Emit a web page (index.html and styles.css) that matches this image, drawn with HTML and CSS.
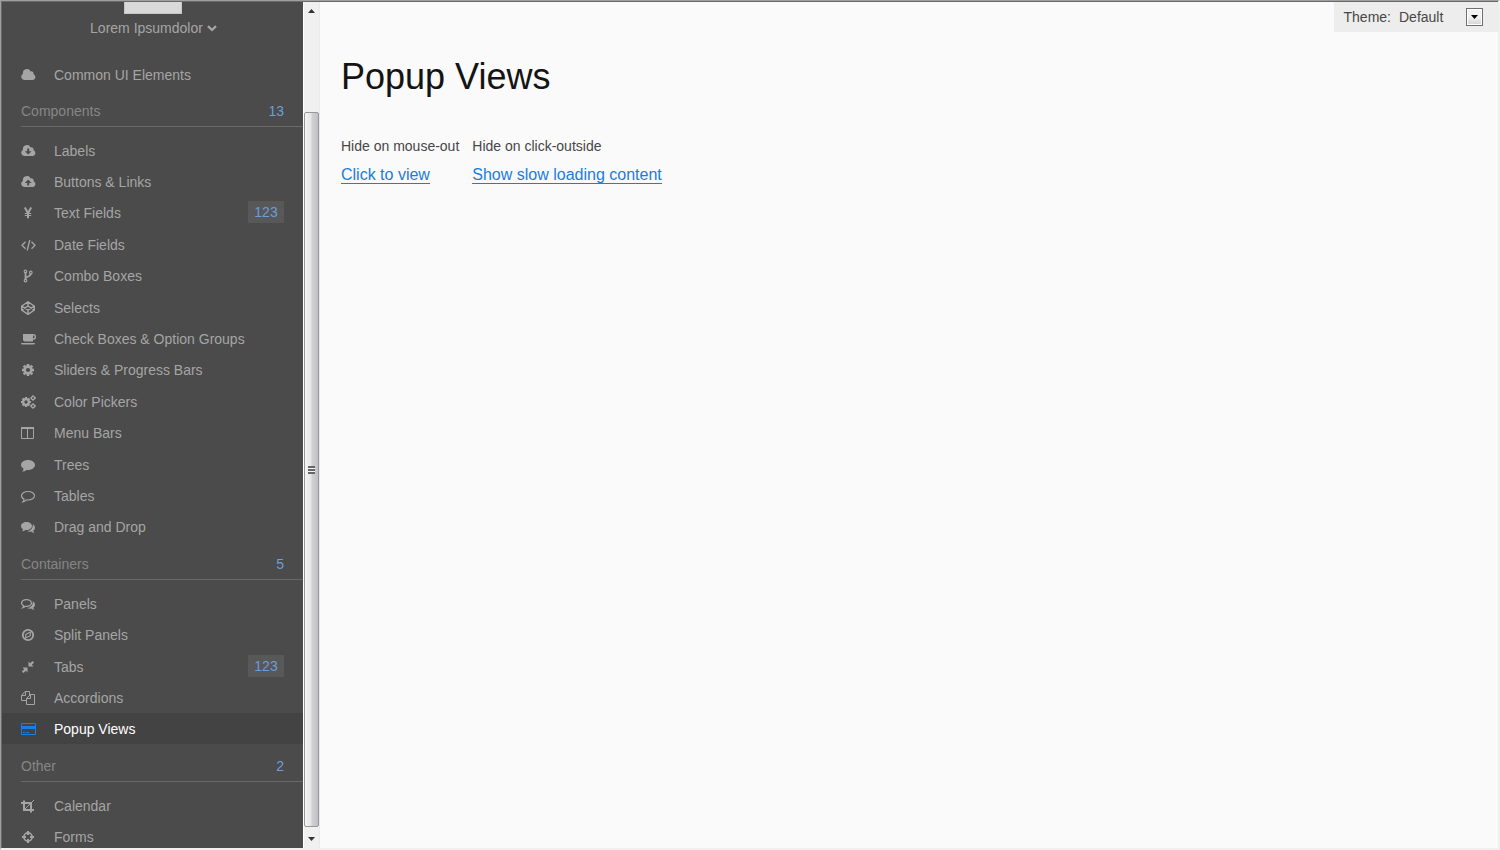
FILE: index.html
```html
<!DOCTYPE html>
<html lang="en">
<head>
<meta charset="utf-8">
<title>Popup Views</title>
<link rel="stylesheet" href="styles.css">
</head>
<body>
<div class="app">
  <aside class="sidebar">
    <div class="avatar"></div>
    <button class="user" type="button">Lorem Ipsumdolor
      <svg class="user-caret" viewBox="0 0 10 7"><path d="M1 1.2 5 5 9 1.2" fill="none" stroke="currentColor" stroke-width="2.3"/></svg>
    </button>
    <nav class="menu">
      <ul class="list">
        <li><a class="item" href="#"><svg class="icon" viewBox="0 0 15 14"><path d="M3.300 12A3.300 3.300 0 0 1 2 5.800 4 4 0 0 1 9.600 3.500 2.200 2.200 0 0 1 12.500 6.300 3 3 0 0 1 12.200 12z"/></svg>Common UI Elements</a></li>
      </ul>

      <h2 class="heading">Components <span class="count">13</span></h2>
      <ul class="list list-long">
        <li><a class="item" href="#"><svg class="icon" viewBox="0 0 15 14"><path fill-rule="evenodd" d="M3.300 12A3.300 3.300 0 0 1 2 5.800 4 4 0 0 1 9.600 3.500 2.200 2.200 0 0 1 12.500 6.300 3 3 0 0 1 12.200 12zM6.200 4.500v2.800H3.900L7.200 10.600 10.500 7.300H8.200V4.500z"/></svg>Labels</a></li>
        <li><a class="item" href="#"><svg class="icon" viewBox="0 0 15 14"><path fill-rule="evenodd" d="M3.300 12A3.300 3.300 0 0 1 2 5.800 4 4 0 0 1 9.600 3.500 2.200 2.200 0 0 1 12.500 6.300 3 3 0 0 1 12.200 12zM6.200 10.600V7.900H3.900L7.200 4.600 10.500 7.900H8.200v2.700z"/></svg>Buttons &amp; Links</a></li>
        <li><a class="item" href="#"><svg class="icon" viewBox="0 0 15 14"><path class="line" stroke-width="2" d="M3.800 1.500 7 7 10.200 1.500M7 6.500v5.800"/><path class="line" stroke-width="1.200" d="M3.800 7.500h6.400M3.800 9.500h6.400"/></svg>Text Fields</a><span class="badge">123</span></li>
        <li><a class="item" href="#"><svg class="icon" viewBox="0 0 15 14"><path class="line" stroke-width="1.300" d="M4.500 3.800 1 7.300l3.500 3.500M10.500 3.800 14 7.300l-3.500 3.500M8.800 2 6.200 12.500"/></svg>Date Fields</a></li>
        <li><a class="item" href="#"><svg class="icon" viewBox="0 0 15 14"><g class="line" stroke-width="1.200"><circle cx="4.500" cy="2.400" r="1.300"/><circle cx="4.500" cy="11.600" r="1.300"/><circle cx="9.800" cy="3.500" r="1.300"/></g><path class="line" stroke-width="1.800" d="M4.500 3.700v6.600M9.800 4.800c0 3.200-5 2.200-5 4.800"/></svg>Combo Boxes</a></li>
        <li><a class="item" href="#"><svg class="icon" viewBox="0 0 15 14"><path class="line" stroke-width="1.400" d="M7 .8 13.300 5v4.200L7 13.400.7 9.200V5zM7 .8V5M7 9.200v4.200M.7 5 7 9.200 13.300 5M.7 9.200 7 5l6.300 4.200"/></svg>Selects</a></li>
        <li><a class="item" href="#"><svg class="icon" viewBox="0 0 15 14"><path d="M2 2h10v7.500H4a2 2 0 0 1-2-2zM0 11h14q0 1.500-1.500 1.500h-11Q0 12.500 0 11z"/><path class="line" stroke-width="1.500" d="M11.500 2.800h1a1.500 1.700 0 0 1 0 4.200h-1"/></svg>Check Boxes &amp; Option Groups</a></li>
        <li><a class="item" href="#"><svg class="icon" viewBox="0 0 15 14"><circle class="line" stroke-width="2.600" cx="7" cy="7" r="3.400"/><path class="line" stroke-width="2.600" d="M7 1v2M7 11v2M1 7h2M11 7h2M2.700 2.700l1.300 1.300M10 10l1.300 1.300M11.300 2.700 10 4M4 10l-1.300 1.300"/></svg>Sliders &amp; Progress Bars</a></li>
        <li><a class="item" href="#"><svg class="icon" viewBox="0 0 15 14"><circle class="line" stroke-width="2.200" cx="5" cy="7" r="2.800"/><path class="line" stroke-width="2.200" d="M5 2v2M5 10v2M0 7h2M8 7h2M1.500 3.500l1.300 1.300M7.200 9.200l1.300 1.300M8.500 3.500 7.200 4.800M2.800 9.200l-1.300 1.300"/><g class="line" stroke-width="1.300"><circle cx="12" cy="3" r="1.600"/><circle cx="12" cy="11" r="1.600"/><path d="M12 .2v1M12 4.800v1M9.300 3h1M13.700 3h1.200M12 8.200v1M12 12.800v1M9.300 11h1M13.700 11h1.200"/></g></svg>Color Pickers</a></li>
        <li><a class="item" href="#"><svg class="icon" viewBox="0 0 15 14"><path class="line" d="M.5 1.500h12v11H.5zM6.500 2v10.500"/><path d="M0 1h13v2H0z"/></svg>Menu Bars</a></li>
        <li><a class="item" href="#"><svg class="icon" viewBox="0 0 15 14"><path d="M7 2c3.900 0 7 2.200 7 5s-3.100 5-7 5q-.7 0-1.400-.1Q3.700 13.500 1 13.600q1.500-1.300 1.600-2.800Q0 9.400 0 7c0-2.800 3.100-5 7-5z"/></svg>Trees</a></li>
        <li><a class="item" href="#"><svg class="icon" viewBox="0 0 15 14"><path class="line" stroke-width="1.200" d="M7 2.500c3.600 0 6.500 1.900 6.500 4.300S10.600 11 7 11q-.8 0-1.500-.1Q3.800 12.500 1.900 12.800q1.200-1.300 1.200-2.700Q.5 8.900.5 6.800C.5 4.400 3.400 2.500 7 2.500z"/></svg>Tables</a></li>
        <li><a class="item" href="#"><svg class="icon" viewBox="0 0 15 14"><path d="M5.500 2C8.500 2 11 3.700 11 6s-2.500 4-5.500 4l-1-.1Q3 11.200 1 11.300q1-1 1.100-2Q0 8.200 0 6c0-2.300 2.500-4 5.500-4zM11.900 4.200Q14 5.300 14 7.800q0 1.900-1.800 3 .2 1.200 1.300 2.200-2-.1-3.300-1.400-2.300.4-4.200-.6 6-.5 5.900-6.800z"/></svg>Drag and Drop</a></li>
      </ul>

      <h2 class="heading">Containers <span class="count">5</span></h2>
      <ul class="list list-medium">
        <li><a class="item" href="#"><svg class="icon" viewBox="0 0 15 14"><path class="line" stroke-width="1.300" d="M5.500 2.600c2.700 0 4.900 1.500 4.900 3.400S8.200 9.400 5.500 9.400l-1.200-.1Q3 10.300 1.900 10.600q.7-.8.7-1.800Q.6 7.800.6 6c0-1.900 2.200-3.400 4.900-3.400z"/><path d="M11.900 4.200Q14 5.300 14 7.800q0 1.900-1.800 3 .2 1.200 1.300 2.200-2-.1-3.300-1.400-2.300.4-4.200-.6 6-.5 5.900-6.800z"/></svg>Panels</a></li>
        <li><a class="item" href="#"><svg class="icon" viewBox="0 0 15 14"><circle class="line" stroke-width="1.800" cx="7" cy="7" r="5.200"/><path fill-rule="evenodd" d="M9.800 3.200v4.900L4.200 10.800V6zM8.700 5.100 5.300 6.700v2.400L8.700 7.400z"/></svg>Split Panels</a></li>
        <li><a class="item" href="#"><svg class="icon" viewBox="0 0 15 14"><path d="M7.500 6.500v-5l1.700 1.700L11.500.9 13.100 2.500 10.800 4.800 12.500 6.500zM6.500 7.500v5L4.800 10.800 2.500 13.100.9 11.500 3.200 9.200 1.500 7.500z"/></svg>Tabs</a><span class="badge">123</span></li>
        <li><a class="item" href="#"><svg class="icon" viewBox="0 0 15 14"><path class="line" d="M5.500 9.500h-5v-5l3.500-4h4.500v3.500M4.500.5v4h-4M9.500 3.500h4v10h-8v-6zM9.500 3.500v4h-4"/></svg>Accordions</a></li>
        <li><a class="item item-active" href="#" aria-current="page"><svg class="icon" viewBox="0 0 15 14"><path class="line" d="M.5 1.500h14v11H.5z"/><path d="M0 4h15v3H0zM2 10h2v1H2zM5 10h3v1H5z"/></svg>Popup Views</a></li>
      </ul>

      <h2 class="heading">Other <span class="count">2</span></h2>
      <ul class="list">
        <li><a class="item" href="#"><svg class="icon" viewBox="0 0 15 14"><path class="line" stroke-width="2" d="M0 4h10v9.500M3 1.500V11h10"/><path class="line" d="M3.500 10.500 13 1"/></svg>Calendar</a></li>
        <li><a class="item" href="#"><svg class="icon" viewBox="0 0 15 14"><circle class="line" stroke-width="1.600" cx="7" cy="7" r="4.100"/><path class="line" stroke-width="2" d="M7 1v4M7 9v4M1 7h4M9 7h4"/></svg>Forms</a></li>
      </ul>
    </nav>
  </aside>

  <div class="scrollbar" aria-hidden="true">
    <svg class="scroll-arrow" viewBox="0 0 7 4"><path d="M0 4 3.500 0 7 4z"/></svg>
    <div class="scroll-track">
      <div class="scroll-thumb"><span class="grip"></span></div>
    </div>
    <svg class="scroll-arrow" viewBox="0 0 7 4"><path d="M0 0 3.500 4 7 0z"/></svg>
  </div>

  <main class="content">
    <div class="theme">
      <label for="theme">Theme:</label>
      <div class="picker">
        <select id="theme" class="select"><option>Default</option></select>
        <span class="drop"><svg class="drop-arrow" viewBox="0 0 7 4"><path d="M0 0h7L3.500 4z"/></svg></span>
      </div>
    </div>
    <h1 class="title">Popup Views</h1>
    <div class="examples">
      <section>
        <h3 class="caption">Hide on mouse-out</h3>
        <a class="link" href="#">Click to view</a>
      </section>
      <section>
        <h3 class="caption">Hide on click-outside</h3>
        <a class="link" href="#">Show slow loading content</a>
      </section>
    </div>
  </main>
</div>
</body>
</html>
```

FILE: styles.css
```css
* { box-sizing: border-box; }

body {
  margin: 0;
  font: 14px/22px "Liberation Sans", Arial, sans-serif;
  color: #474747;
  background: #fafafa;
}

ul, h1, h2, h3 { margin: 0; padding: 0; font-weight: normal; }
ul { list-style: none; }
a { text-decoration: none; }

.app {
  display: flex;
  height: 100vh;
  overflow: hidden;
  border: 1px solid #a0a0a0;
  border-right: 2px solid #f0f0f0;
  border-bottom: 2px solid #f0f0f0;
  box-shadow: inset 1px 1px #696969;
  padding: 1px 0 0 1px;
}

.sidebar {
  flex: 0 0 301px;
  display: flex;
  flex-direction: column;
  overflow: hidden;
  background: #4b4b4b;
  color: #a5a5a5;
}

.sidebar > * { flex-shrink: 0; }

.avatar {
  align-self: center;
  width: 58px;
  height: 12px;
  background: #d9d9d9;
  border: 1px solid #c6c6c6;
  border-top: 0;
}

.user {
  align-self: center;
  display: flex;
  align-items: center;
  gap: 4px;
  margin: 3px 0 19px 2px;
  padding: 0;
  border: 0;
  background: none;
  color: inherit;
  font: inherit;
}

.user-caret { width: 10px; height: 7px; }

.list { display: flex; flex-direction: column; }
.list-long { min-height: 408px; }
.list-medium { min-height: 157px; }

.list li {
  flex: 1 0 31px;
  display: grid;
  align-items: stretch;
}

.list li > * { grid-area: 1 / 1; }

.item {
  display: flex;
  align-items: center;
  gap: 18px;
  padding: 2px 0 0 19px;
  color: inherit;
}

.item-active { background: #434343; color: #fff; }
.item-active .icon { color: #197de1; }

.icon {
  flex: none;
  width: 15px;
  height: 14px;
  fill: currentColor;
}

.line { fill: none; stroke: currentColor; }

.heading {
  display: flex;
  justify-content: space-between;
  margin: 0 0 7px 19px;
  padding: 11px 19px 4px 0;
  border-bottom: 1px solid #696969;
  font-size: 14px;
  color: #868686;
}

.count, .badge { color: #6a9fd8; }

.badge {
  justify-self: end;
  align-self: center;
  min-width: 36px;
  margin-right: 19px;
  background: #585858;
  text-align: center;
}

.scrollbar {
  flex: 0 0 17px;
  display: flex;
  flex-direction: column;
  align-items: center;
  padding: 7px 0;
  border-left: 1px solid #fff;
  border-right: 1px solid #e9e9e9;
  background: #f0f0f0;
}

.scroll-arrow { width: 7px; height: 4px; fill: #333; }

.scroll-track {
  flex: 1;
  align-self: stretch;
  display: flex;
  flex-direction: column;
  padding: 99px 0 10px;
}

.scroll-thumb {
  flex: 1;
  display: flex;
  align-items: center;
  justify-content: center;
  border: 1px solid #979797;
  border-radius: 2px;
  background: linear-gradient(90deg, #f5f5f5, #e6e6e8 45%, #d0d0d4 55%, #c0c0c6);
}

.grip {
  width: 7px;
  height: 8px;
  background: repeating-linear-gradient(#666 0 2px, #f2f2f2 2px 3px);
}

.content {
  flex: 1;
  display: flex;
  flex-direction: column;
  min-width: 0;
}

.theme {
  align-self: flex-end;
  display: flex;
  align-items: center;
  gap: 8px;
  height: 30px;
  padding: 0 15px 0 10px;
  background: #ededed;
}

.picker { display: grid; align-items: center; width: 84px; }
.picker > * { grid-area: 1 / 1; }

.select {
  appearance: none;
  width: 100%;
  height: 22px;
  padding: 0;
  border: 0;
  background: none;
  color: inherit;
  font: inherit;
}

.drop {
  justify-self: end;
  display: grid;
  place-items: center;
  width: 17px;
  height: 18px;
  border: 1px solid #707070;
  box-shadow: inset 0 0 0 1px #fff;
  background: linear-gradient(#f2f2f2 50%, #d4d4d4);
  pointer-events: none;
}

.drop-arrow { width: 7px; height: 4px; fill: #000; }

.title {
  margin: 23px 21px 0;
  font-size: 36px;
  line-height: 44px;
  color: #141414;
}

.examples { display: flex; gap: 13px; padding: 36px 21px; }

.caption { font-size: 14px; line-height: 22px; margin-bottom: 7px; }

.link {
  display: inline-block;
  font-size: 16px;
  line-height: 17px;
  color: #197de1;
  border-bottom: 1px solid;
}
```
